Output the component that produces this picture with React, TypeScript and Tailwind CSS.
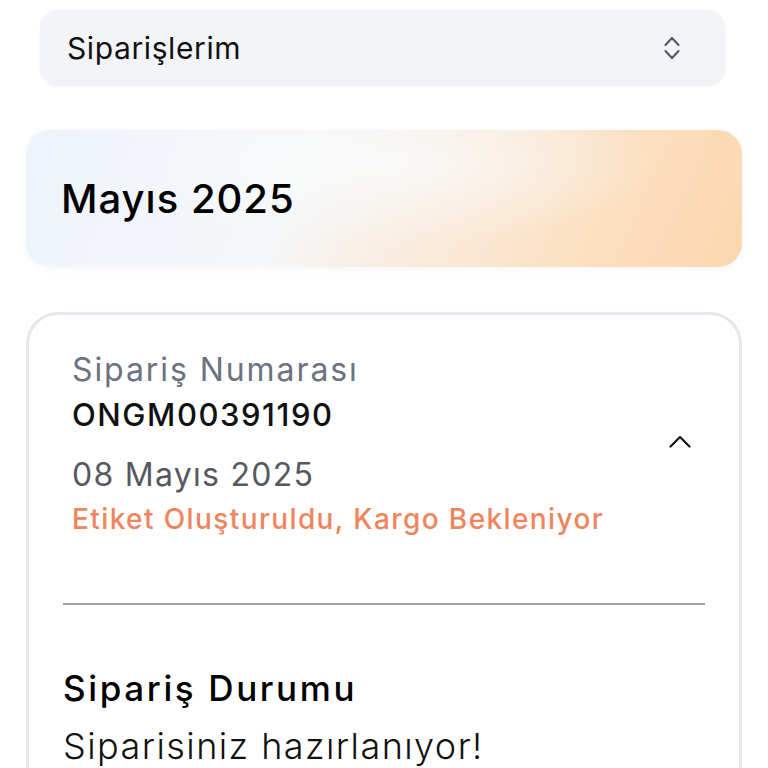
import React from "react";

const font = { fontFamily: "Inter, 'Noto Sans', sans-serif" };

const UpDown = () => (
  <svg width="16" height="26" viewBox="0 0 16 26" fill="none" stroke="#4b5563" strokeWidth="2" strokeLinecap="round" strokeLinejoin="round">
    <path d="M1.5 10 L8 3 L14.5 10" />
    <path d="M1.5 16 L8 23 L14.5 16" />
  </svg>
);

const ChevronUp = () => (
  <svg width="22" height="13" viewBox="0 0 22 13" fill="none" stroke="#111" strokeWidth="2.2" strokeLinecap="round" strokeLinejoin="round">
    <path d="M1.5 11.5 L11 2 L20.5 11.5" />
  </svg>
);

export default function App() {
  return (
    <div className="min-h-screen bg-white px-[26px] pt-[10px] text-black" style={font}>
      {/* dropdown */}
      <div className="ml-[14px] mr-[17px] flex h-[76px] items-center justify-between rounded-[18px] bg-[#f2f4f8] pl-[27px] pr-[45px] shadow-[0_1px_3px_rgba(0,0,0,0.04)]">
        <span className="text-[30px] leading-none tracking-[0.02em] text-[#111]">Siparişlerim</span>
        <UpDown />
      </div>

      {/* month header */}
      <div className="mt-[44px] flex h-[137px] items-center rounded-[24px] bg-[radial-gradient(ellipse_38%_60%_at_50%_25%,rgba(249,250,250,0.9),rgba(249,250,250,0)),linear-gradient(115deg,#eef4fc_0%,#f5f7f9_38%,#f9ecdf_55%,#fbe1c5_75%,#fcd7ac_100%)] pl-[35px] shadow-[0_2px_8px_rgba(0,0,0,0.04)]">
        <h2 className="text-[40px] font-[550] leading-none tracking-[0.025em]">Mayıs 2025</h2>
      </div>

      {/* order card */}
      <div className="mt-[45px] rounded-[32px] border-[3px] border-[#e4e7eb] bg-white">
        <div className="flex items-center justify-between pl-[43px] pr-[48px] pt-[35px]">
          <div className="flex flex-col">
            <span className="text-[32px] leading-[40px] tracking-[0.06em] text-[#6b7280]">Sipariş Numarası</span>
            <span className="mt-[5px] text-[31px] font-medium leading-[40px] tracking-[0.05em] text-[#111]">ONGM00391190</span>
            <span className="mt-[20px] text-[32px] leading-[40px] tracking-[0.04em] text-[#55595f]">08 Mayıs 2025</span>
            <span className="mt-[5px] text-[28px] font-medium leading-[38px] tracking-[0.05em] text-[#f0845d]">
              Etiket Oluşturuldu, Kargo Bekleniyor
            </span>
          </div>
          <div className="mb-[6px]">
            <ChevronUp />
          </div>
        </div>

        <div className="px-[34px]">
          <div className="mt-[65px] h-[2px] bg-[#a3a3a3]" />
          <h3 className="mt-[61px] text-[35px] font-[550] leading-[44px] tracking-[0.075em]">Sipariş Durumu</h3>
          <p className="mt-[12px] text-[36px] font-light leading-[48px] tracking-[0.04em] text-[#111]">Siparisiniz hazırlanıyor!</p>
          <div className="h-[200px]" />
        </div>
      </div>
    </div>
  );
}
